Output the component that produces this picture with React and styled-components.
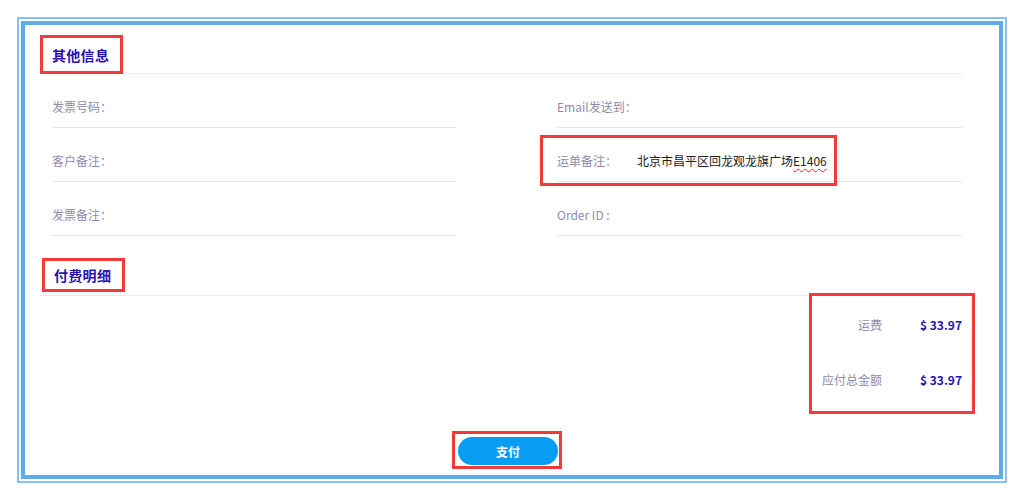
import React from "react";
import styled, { createGlobalStyle } from "styled-components";

const Global = createGlobalStyle`
  html, body { margin: 0; padding: 0; background: #fff; }
  body { font-family: "Noto Sans CJK SC", "Noto Sans", sans-serif; }
`;

const Page = styled.div`
  padding: 17px 0 0 17px;
  width: 1024px;
  height: 500px;
  box-sizing: border-box;
`;

const OuterFrame = styled.div`
  width: 990px;
  height: 466px;
  box-sizing: border-box;
  border: 2px solid #86c2ef;
  padding: 2px;
`;

const InnerFrame = styled.div`
  height: 100%;
  box-sizing: border-box;
  border: 4px solid #5eabe7;
  padding: 10px 37px 0 15px;
  display: flex;
  flex-direction: column;
`;

const HeaderRow = styled.div`
  display: flex;
  align-items: flex-start;
  height: ${(p) => p.$h}px;
  margin-top: ${(p) => p.$mt || 0}px;
  border-bottom: 1px solid #ececf0;
`;

const Title = styled.div`
  height: ${(p) => p.$h}px;
  box-sizing: border-box;
  margin-left: ${(p) => p.$ml || 0}px;
  border: 3px solid #f23a3a;
  padding: 0 11px 0 9px;
  display: flex;
  align-items: center;
  font-size: 14px;
  font-weight: 700;
  color: #2a12b2;
  letter-spacing: 0.3px;
`;

const Grid = styled.div`
  display: grid;
  grid-template-columns: 404px 405px;
  column-gap: 101px;
  padding-left: 12px;
`;

const Field = styled.div`
  position: relative;
  height: 54px;
  box-sizing: border-box;
  border-bottom: 1px solid #e6e6ee;
  display: flex;
  align-items: flex-end;
  padding-bottom: 12px;
  font-size: 12px;
  line-height: 16px;
`;

const Label = styled.span`
  color: #8e8aab;
  width: 80px;
  white-space: nowrap;
`;

const Value = styled.span`
  color: #222;
  white-space: nowrap;
`;

const Misspelled = styled.span`
  text-decoration: underline wavy #e23;
  text-decoration-thickness: 1px;
  text-underline-offset: 2px;
`;

const Highlight = styled.div`
  position: absolute;
  left: ${(p) => p.$l}px;
  top: ${(p) => p.$t}px;
  width: ${(p) => p.$w}px;
  height: ${(p) => p.$h}px;
  border: 3px solid #f23a3a;
  box-sizing: border-box;
  pointer-events: none;
`;

const SummaryWrap = styled.div`
  align-self: flex-end;
  position: relative;
  display: flex;
  flex-direction: column;
  gap: 35px;
  padding-top: 18px;
`;

const SummaryRow = styled.div`
  display: flex;
  height: 20px;
  align-items: center;
  font-size: 12px;
`;

const SumLabel = styled.span`
  color: #8e8aab;
  text-align: right;
  width: 73px;
`;

const SumValue = styled.span`
  color: #2a12b2;
  font-weight: 700;
  width: 80px;
  text-align: right;
`;

const ButtonRow = styled.div`
  display: flex;
  justify-content: center;
  padding-left: 12px;
  margin-top: 42px;
`;

const ButtonMark = styled.div`
  border: 3px solid #f23a3a;
  padding: 3px 1px 1px 3px;
`;

const PayButton = styled.button`
  width: 100px;
  height: 28px;
  border: none;
  border-radius: 14px;
  background: #089df5;
  color: #fff;
  font-family: "Noto Sans CJK SC", sans-serif;
  font-size: 12px;
  font-weight: 700;
  display: block;
  padding: 0;
`;

export default function App() {
  return (
    <>
      <Global />
      <Page>
        <OuterFrame>
          <InnerFrame>
            <HeaderRow $h={38}>
              <Title $h={39}>其他信息</Title>
            </HeaderRow>
            <Grid>
              <Field><Label>发票号码：</Label></Field>
              <Field><Label>Email发送到：</Label></Field>
              <Field><Label>客户备注：</Label></Field>
              <Field>
                <Label>运单备注：</Label>
                <Value>北京市昌平区回龙观龙旗广场<Misspelled>E1406</Misspelled></Value>
                <Highlight $l={-17} $t={7} $w={297} $h={51} />
              </Field>
              <Field><Label>发票备注：</Label></Field>
              <Field><Label>Order ID :</Label></Field>
            </Grid>
            <HeaderRow $h={37} $mt={22}>
              <Title $h={34} $ml={2}>付费明细</Title>
            </HeaderRow>
            <SummaryWrap>
              <SummaryRow>
                <SumLabel>运费</SumLabel>
                <SumValue>$ 33.97</SumValue>
              </SummaryRow>
              <SummaryRow>
                <SumLabel>应付总金额</SumLabel>
                <SumValue>$ 33.97</SumValue>
              </SummaryRow>
              <Highlight $l={0} $t={-3} $w={166} $h={121} />
            </SummaryWrap>
            <ButtonRow>
              <ButtonMark>
                <PayButton>支付</PayButton>
              </ButtonMark>
            </ButtonRow>
          </InnerFrame>
        </OuterFrame>
      </Page>
    </>
  );
}
